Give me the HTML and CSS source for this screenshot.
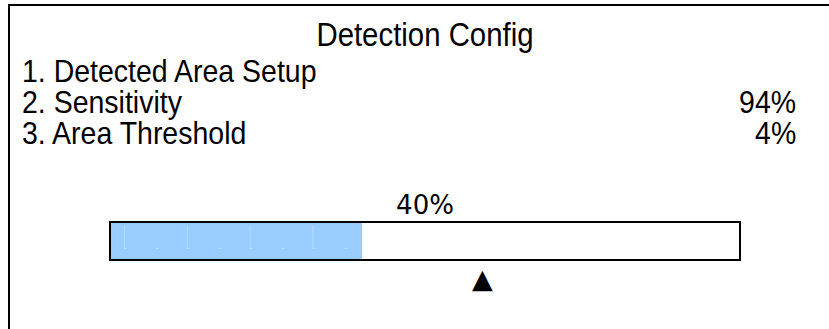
FILE: index.html
```
<!DOCTYPE html>
<html lang="en">
<head>
	<meta charset="UTF-8">
	<title>Detection Config</title>
	<link rel="stylesheet" href="styles.css">
</head>
<body>
	<div class="panel">
		<p class="title"><span>Detection Config</span></p>
		<ul class="menu">
			<li><span class="label">1. Detected Area Setup</span></li>
			<li><span class="label">2. Sensitivity</span><span class="num">94%</span></li>
			<li><span class="label">3. Area Threshold</span><span class="num">4%</span></li>
		</ul>

		<div class="meter">
			<p class="value">40%</p>
			<div class="bar">
				<div class="fill" style="width: 40%"></div>
			</div>
			<div class="marker">&#9650;</div>
		</div>
	</div>
</body>
</html>
```

FILE: styles.css
```
body, p, ul, li {
	margin: 0;
	padding: 0;
}
body {
	overflow: hidden;
	background: #fff;
	font-family: "Liberation Sans", Arial, sans-serif;
	color: #000;
}

.panel {
	width: 830px;
	height: 340px;
	margin: 4px 0 0 8px;
	border: 2px solid #000;
}

/* text is a narrow helvetica, squeeze the liberation glyphs */
.title span,
.menu span {
	display: inline-block;
	transform: scaleX(0.89);
}
.label {
	transform-origin: left center;
}
.num {
	transform-origin: right center;
}

.title {
	text-align: center;
	font-size: 33px;
	line-height: 34px;
	margin-top: 12px;
}

.menu {
	list-style: none;
	padding: 0 44px 0 12px;
	margin-top: 4px;
}
.menu li {
	display: flex;
	justify-content: space-between;
	font-size: 32px;
	line-height: 31px;
}

.meter {
	margin-top: 41px;
}
.value {
	text-align: center;
	font-family: "DejaVu Sans", sans-serif;
	font-size: 26px;
	line-height: 30px;
}
.bar {
	width: 628px;
	height: 36px;
	margin: 1px auto 0;
	border: 2px solid #000;
}
.fill {
	height: 100%;
	background-color: #99ccff;
	background-image:
		linear-gradient(to right, #b5dbff 1px, transparent 1px),
		linear-gradient(to right, #b5dbff 3px, transparent 3px),
		linear-gradient(to right, #b5dbff 3px, transparent 3px);
	background-size: 62.8px 24px, 62.8px 1px, 62.8px 1px;
	background-position: 13px 2px, 13px 25px, 45px 25px;
	background-repeat: repeat-x;
}
.marker {
	padding-left: 462px;
	margin-top: 5px;
	font-family: "DejaVu Sans", sans-serif;
	font-size: 27px;
	line-height: 26px;
}
```
